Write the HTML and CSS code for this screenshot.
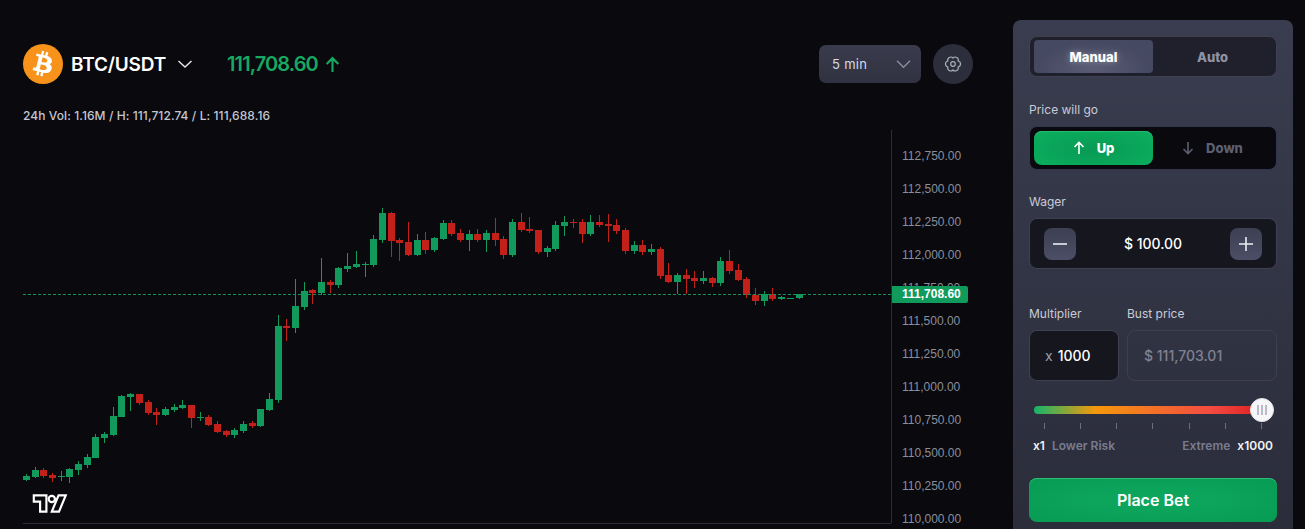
FILE: index.html
```html
<!DOCTYPE html>
<html lang="en">
<head>
    <meta charset="UTF-8">
    <meta name="viewport" content="width=device-width, initial-scale=1.0">
    <title>BTC/USDT</title>
    <link rel="stylesheet" href="styles.css">
</head>
<body>
    <div class="page">
        <main class="market">
            <div class="market-head">
                <svg class="coin" viewBox="0 0 64 64">
                    <circle cx="32" cy="32" r="32" fill="#f7931a"/>
                    <path fill="#fff" d="M46.1 27.4c.6-4.3-2.600-6.600-7.100-8.100l1.500-5.900-3.600-.9-1.400 5.700c-.9-.2-1.900-.5-2.900-.7l1.400-5.800-3.600-.9-1.500 5.900c-.8-.2-1.500-.4-2.200-.5l-4.900-1.200-.9 3.800s2.600.6 2.600.6c1.400.4 1.700 1.300 1.600 2l-1.600 6.600c.1 0 .2.1.4.1l-.4-.1-2.300 9.200c-.2.4-.6 1.100-1.600.8 0 0-2.600-.7-2.600-.7l-1.800 4.100 4.700 1.200c.9.2 1.700.4 2.600.7l-1.500 6 3.600.9 1.500-5.900c1 .3 1.900.5 2.900.7l-1.500 5.900 3.600.9 1.500-6c6.200 1.200 10.800.7 12.800-4.900 1.600-4.500-.1-7.100-3.300-8.800 2.400-.5 4.100-2.100 4.600-5.200zm-8.300 11.600c-1.100 4.500-8.700 2.100-11.200 1.500l2-8c2.500.6 10.400 1.800 9.200 6.500zm1.100-11.700c-1 4.100-7.300 2-9.400 1.500l1.800-7.300c2.100.5 8.700 1.500 7.600 5.800z"/>
                </svg>
                <span class="pair">BTC/USDT</span>
                <svg class="pair-caret" viewBox="0 0 16 10"><path d="M1.500 2l6.500 6 6.500-6"/></svg>
                <span class="last-price">111,708.60</span>
                <svg class="last-arrow" viewBox="0 0 16 16"><path d="M8 15V2M2.500 7.500L8 2l5.500 5.500"/></svg>
                <div class="interval">
                    <span>5 min</span>
                    <svg viewBox="0 0 16 10"><path d="M1 1.500l7 7 7-7"/></svg>
                </div>
                <div class="settings">
                    <svg viewBox="0 0 24 24">
                        <path d="M12 6A3.100 3.100 0 0 1 17.200 9 3.100 3.100 0 0 1 17.200 15 3.100 3.100 0 0 1 12 18 3.100 3.100 0 0 1 6.800 15 3.100 3.100 0 0 1 6.800 9 3.100 3.100 0 0 1 12 6z"/>
                        <circle cx="12" cy="12" r="2.300"/>
                    </svg>
                </div>
            </div>

            <div class="stats">24h Vol: 1.16M / H: 111,712.74 / L: 111,688.16</div>

            <div class="chart">
                <div class="plot">
                    <svg id="candles" class="candles" viewBox="23 130 868 393"></svg>
                    <div class="price-line"></div>
                    <svg class="tv-logo" viewBox="-2 2 40 22">
                        <path d="M14 22H7V11H0V4h14v18zM28 22h-8l7.500-18h8L28 22z"/>
                        <circle cx="20" cy="8" r="3.500"/>
                    </svg>
                </div>
                <div class="axis">
                    <span>112,750.00</span>
                    <span>112,500.00</span>
                    <span>112,250.00</span>
                    <span>112,000.00</span>
                    <span>111,750.00</span>
                    <span>111,500.00</span>
                    <span>111,250.00</span>
                    <span>111,000.00</span>
                    <span>110,750.00</span>
                    <span>110,500.00</span>
                    <span>110,250.00</span>
                    <span>110,000.00</span>
                    <div class="axis-tag">111,708.60</div>
                </div>
            </div>
        </main>

        <aside class="panel">
            <div class="tabs">
                <div class="tab tab-active">Manual</div>
                <div class="tab">Auto</div>
            </div>

            <div class="field-label label-direction">Price will go</div>
            <div class="direction">
                <div class="dir-btn dir-up">
                    <svg viewBox="0 0 12 14"><path d="M6 13V1.500M1.500 6L6 1.500 10.500 6"/></svg>
                    <span>Up</span>
                </div>
                <div class="dir-btn dir-down">
                    <svg viewBox="0 0 12 14"><path d="M6 1v11.500M1.500 8L6 12.500 10.500 8"/></svg>
                    <span>Down</span>
                </div>
            </div>

            <div class="field-label label-wager">Wager</div>
            <div class="wager">
                <div class="step"><svg viewBox="0 0 16 16"><path d="M1 8h14"/></svg></div>
                <span>$ 100.00</span>
                <div class="step"><svg viewBox="0 0 16 16"><path d="M1 8h14M8 1v14"/></svg></div>
            </div>

            <div class="pair-fields">
                <div class="field-multiplier">
                    <div class="field-label">Multiplier</div>
                    <div class="multiplier"><em>x</em> 1000</div>
                </div>
                <div class="field-bust">
                    <div class="field-label">Bust price</div>
                    <div class="bust">$ 111,703.01</div>
                </div>
            </div>

            <div class="slider">
                <div class="slider-track"></div>
                <div class="slider-thumb"><i></i><i></i><i></i></div>
            </div>
            <div class="ticks"><i></i><i></i><i></i><i></i><i></i><i></i><i></i></div>
            <div class="risk">
                <div><b>x1</b> <span>Lower Risk</span></div>
                <div><span>Extreme</span> <b>x1000</b></div>
            </div>

            <button class="place-bet" type="button">Place Bet</button>
        </aside>
    </div>

    <script src="chart.js"></script>
</body>
</html>
```
FILE: styles.css
```css
* {
    box-sizing: border-box;
}
html, body {
    height: 100%;
    overflow: hidden;
}
body {
    margin: 0;
    background-color: #09090e;
    color: #fff;
    font-family: Inter, "Liberation Sans", sans-serif;
}
.page {
    display: flex;
    height: 529px;
    padding: 20px 12px 0 23px;
}
.market {
    flex: 1;
    min-width: 0;
    padding-top: 24px;
}
.market-head {
    display: flex;
    align-items: center;
    height: 40px;
    padding-right: 40px;
}
.coin {
    width: 40px;
    height: 40px;
}
.pair {
    margin-left: 8px;
    font-size: 19px;
    font-weight: 600;
    letter-spacing: -0.2px;
}
.pair-caret {
    width: 16px;
    height: 10px;
    margin-left: 11px;
    fill: none;
    stroke: #e8e9ee;
    stroke-width: 1.4;
}
.last-price {
    margin-left: 34px;
    color: #17a862;
    font-size: 20px;
    font-weight: 600;
    letter-spacing: -0.9px;
}
.last-arrow {
    width: 17px;
    height: 17px;
    margin-left: 6px;
    fill: none;
    stroke: #17a862;
    stroke-width: 2;
}
.interval {
    display: flex;
    align-items: center;
    justify-content: space-between;
    width: 102px;
    height: 38px;
    margin-left: auto;
    padding: 0 10px 0 13px;
    border-radius: 7px;
    background: linear-gradient(#3a3c4d, #303241);
    color: #d6dbe6;
    font-size: 13px;
    letter-spacing: 0.3px;
}
.interval svg {
    width: 15px;
    height: 10px;
    fill: none;
    stroke: #8d90a0;
    stroke-width: 1.3;
}
.settings {
    display: flex;
    align-items: center;
    justify-content: center;
    width: 40px;
    height: 40px;
    margin-left: 12px;
    border-radius: 50%;
    background-color: #2c2e3b;
}
.settings svg {
    width: 24px;
    height: 24px;
    fill: none;
    stroke: #a9adba;
    stroke-width: 1.2;
}
.stats {
    margin-top: 24px;
    color: #c4c7d2;
    font-size: 12px;
    font-weight: 500;
    line-height: 16px;
    letter-spacing: 0.08px;
}
.chart {
    display: flex;
    height: 393px;
    margin-top: 6px;
    margin-right: -40px;
}
.plot {
    position: relative;
    width: 868px;
    height: 394px;
    border-bottom: 1px solid #2b2c38;
}
.candles {
    display: block;
    width: 868px;
    height: 393px;
}
.price-line {
    position: absolute;
    left: 0;
    right: 0;
    top: 164px;
    border-top: 1px dashed #17915a;
}
.tv-logo {
    position: absolute;
    left: 9px;
    top: 363px;
    width: 36px;
    height: 21px;
    fill: #09090e;
    stroke: #fff;
    stroke-width: 2.4;
}
.axis {
    position: relative;
    display: flex;
    flex-direction: column;
    flex: 1;
    padding: 10px 0 0 10px;
    border-left: 1px solid #2b2c38;
    color: #8b8e9b;
    font-family: "Liberation Sans", sans-serif;
    font-size: 12px;
}
.axis span {
    flex: none;
    height: 33px;
    line-height: 33px;
}
.axis-tag {
    position: absolute;
    left: 0;
    top: 156px;
    width: 76px;
    height: 17px;
    padding-left: 10px;
    border-radius: 0 2px 2px 0;
    background-color: #109a5b;
    color: #fff;
    font-weight: bold;
    line-height: 17px;
}
.panel {
    flex: none;
    width: 280px;
    height: 520px;
    padding: 16px;
    border-radius: 8px 8px 0 0;
    background: linear-gradient(#3a3d4f, #2a2c3a);
}
.tabs {
    display: flex;
    height: 41px;
    padding: 3px 4px;
    border: 1px solid #3f4152;
    border-radius: 8px;
    background-color: #1f202b;
}
.tab {
    display: flex;
    align-items: center;
    justify-content: center;
    width: 119px;
    border-radius: 4px;
    color: #8f92a3;
    font-size: 13px;
    font-weight: 800;
}
.tab-active {
    background: radial-gradient(ellipse at 50% 85%, #595c74, #454961 65%);
    color: #fff;
    text-shadow: 0 0 6px rgba(255,255,255,0.4);
}
.field-label {
    color: #c9ccd6;
    font-size: 12px;
    line-height: 16px;
}
.label-direction {
    margin-top: 25px;
}
.direction {
    display: flex;
    height: 44px;
    margin-top: 8px;
    padding: 4px;
    border: 1px solid #33354a;
    border-radius: 8px;
    background-color: #09090e;
}
.dir-btn {
    display: flex;
    align-items: center;
    justify-content: center;
    gap: 12px;
    width: 119px;
    border-radius: 8px;
    font-size: 13px;
    font-weight: 800;
}
.dir-btn svg {
    width: 12px;
    height: 14px;
    fill: none;
    stroke: currentColor;
    stroke-width: 1.6;
}
.dir-up {
    background: radial-gradient(ellipse at 50% 55%, #089a54, #0bb05f);
    box-shadow: inset 0 1px 0 #2ab873;
    color: #fff;
}
.dir-down {
    color: #5d5f70;
}
.label-wager {
    margin-top: 24px;
}
.wager {
    display: flex;
    align-items: center;
    justify-content: space-between;
    height: 51px;
    margin-top: 8px;
    padding: 0 14px;
    border: 1px solid #3f4152;
    border-radius: 8px;
    background-color: #15161e;
    font-size: 14px;
    font-weight: 500;
}
.step {
    display: flex;
    align-items: center;
    justify-content: center;
    width: 32px;
    height: 32px;
    border-radius: 8px;
    background: linear-gradient(#3d3f52, #4b4e66);
}
.step svg {
    width: 16px;
    height: 16px;
    fill: none;
    stroke: #eceef3;
    stroke-width: 1.6;
}
.pair-fields {
    display: flex;
    gap: 8px;
    margin-top: 37px;
}
.field-multiplier {
    width: 90px;
}
.field-bust {
    width: 150px;
}
.multiplier, .bust {
    display: flex;
    align-items: center;
    height: 51px;
    margin-top: 8px;
    padding: 0 16px;
    border: 1px solid #3f4152;
    border-radius: 8px;
    font-size: 14px;
}
.multiplier {
    gap: 5px;
    padding-left: 15px;
    background-color: #15161e;
    font-weight: 500;
}
.multiplier em {
    color: #9a9dab;
    font-style: normal;
    font-weight: 400;
}
.bust {
    border-color: #3e4051;
    color: #7f8292;
    font-weight: 500;
}
.slider {
    position: relative;
    height: 8px;
    margin: 25px 0 0 5px;
    width: 228px;
}
.slider-track {
    height: 8px;
    border-radius: 4px;
    background: linear-gradient(90deg, #16b56a 0%, #f5980c 27%, #f34a42 78%, #dd1f1f 100%);
}
.slider-thumb {
    position: absolute;
    right: -12px;
    top: -8px;
    display: flex;
    align-items: center;
    justify-content: center;
    gap: 2px;
    width: 24px;
    height: 24px;
    border: 1px solid #e5e6ec;
    border-radius: 50%;
    background-color: #f6f6f8;
}
.slider-thumb i {
    width: 2px;
    height: 10px;
    background-color: #b9bbc6;
}
.ticks {
    display: flex;
    justify-content: space-between;
    width: 218px;
    margin: 9px 0 0 15px;
}
.ticks i {
    width: 1px;
    height: 6px;
    background-color: #6b6e7f;
}
.risk {
    display: flex;
    justify-content: space-between;
    margin-top: 8px;
    padding: 0 4px;
    color: #797c90;
    font-size: 12px;
    font-weight: 600;
    line-height: 18px;
}
.risk b {
    color: #f2f3f6;
    font-weight: 600;
}
.risk span {
    margin: 0 4px;
}
.place-bet {
    display: block;
    width: 100%;
    height: 44px;
    margin-top: 23px;
    border: none;
    border-radius: 8px;
    background: radial-gradient(ellipse at 50% 50%, #0fa85f, #079b52);
    box-shadow: inset 0 1px 0 #2fbb78;
    color: #fff;
    font-family: inherit;
    font-size: 16px;
    font-weight: 600;
}
```
FILE: chart.js
```js
// colour, wick top, body top, body bottom, wick bottom (page y of each candle)
const candles = [
    ['g',474,476,480,481], ['g',467,470,477,478], ['r',468,470,476,478], ['r',473,475,478,482],
    ['g',471,476,477,481], ['g',468,469,477,483], ['g',461,464,470,475], ['g',454,457,465,468],
    ['g',434,437,458,458], ['g',432,434,438,443], ['g',407,416,435,436], ['g',395,396,417,417],
    ['g',393,394,397,411], ['r',394,394,403,405], ['r',400,402,413,415], ['r',408,412,415,425],
    ['g',407,409,415,416], ['g',404,407,410,412], ['g',400,405,408,409], ['r',405,405,418,428],
    ['g',412,417,418,421], ['r',415,417,425,426], ['r',421,424,432,433], ['r',430,431,435,437],
    ['g',428,430,435,438], ['g',421,424,431,433], ['r',421,423,426,428], ['g',409,409,426,427],
    ['g',393,399,410,411], ['g',315,326,400,403], ['r',319,326,328,341], ['g',279,306,328,333],
    ['g',282,291,307,310], ['r',289,290,293,304], ['g',258,282,293,295], ['r',280,282,285,293],
    ['g',267,268,285,288], ['g',253,266,269,272], ['g',251,264,267,268], ['g',262,264,265,277],
    ['g',235,239,265,267], ['g',208,213,240,243], ['r',212,213,241,257], ['r',238,240,243,261],
    ['r',222,242,255,256], ['g',234,240,255,256], ['r',232,240,250,254], ['g',237,238,250,252],
    ['g',220,223,239,240], ['r',220,223,234,236], ['r',229,233,240,242], ['g',230,234,240,251],
    ['r',229,234,240,242], ['g',230,233,240,252], ['r',218,233,240,246], ['r',236,239,255,259],
    ['g',219,222,255,257], ['r',213,222,230,232], ['r',217,229,231,233], ['r',230,230,252,254],
    ['g',246,248,252,257], ['g',221,225,249,251], ['g',216,222,226,236], ['r',219,222,223,228],
    ['r',219,222,234,243], ['g',215,222,234,236], ['r',215,222,225,227], ['r',214,224,226,242],
    ['r',219,225,231,234], ['r',228,230,251,254], ['g',241,245,251,254], ['r',240,245,252,255],
    ['g',244,249,252,255], ['r',247,249,276,279], ['r',263,275,282,283], ['g',273,275,282,294],
    ['r',269,275,279,294], ['r',271,278,281,288], ['g',271,278,281,284], ['r',277,278,283,287],
    ['g',257,261,283,286], ['r',250,261,271,274], ['r',264,270,280,281], ['r',277,279,295,298],
    ['r',288,295,301,305], ['g',291,294,301,306], ['r',288,294,299,301], ['g',296,297,299,300],
    ['g',298,298,299,299], ['g',294,294,298,299]
];

const colors = { g: '#129a5c', r: '#c4201a' };
const svg = document.getElementById('candles');
const NS = 'http://www.w3.org/2000/svg';

function addRect(x, y, width, height, fill) {
    const rect = document.createElementNS(NS, 'rect');
    rect.setAttribute('x', x);
    rect.setAttribute('y', y);
    rect.setAttribute('width', width);
    rect.setAttribute('height', height);
    rect.setAttribute('fill', fill);
    svg.appendChild(rect);
}

candles.forEach((c, i) => {
    // candles sit 8.68px apart, snapped to whole pixels
    const x = Math.round(26 + 8.68 * i);
    const fill = colors[c[0]];
    addRect(x, c[1], 1, c[4] - c[1], fill);
    addRect(x - 3, c[2], 7, Math.max(c[3] - c[2], 1), fill);
});
```
